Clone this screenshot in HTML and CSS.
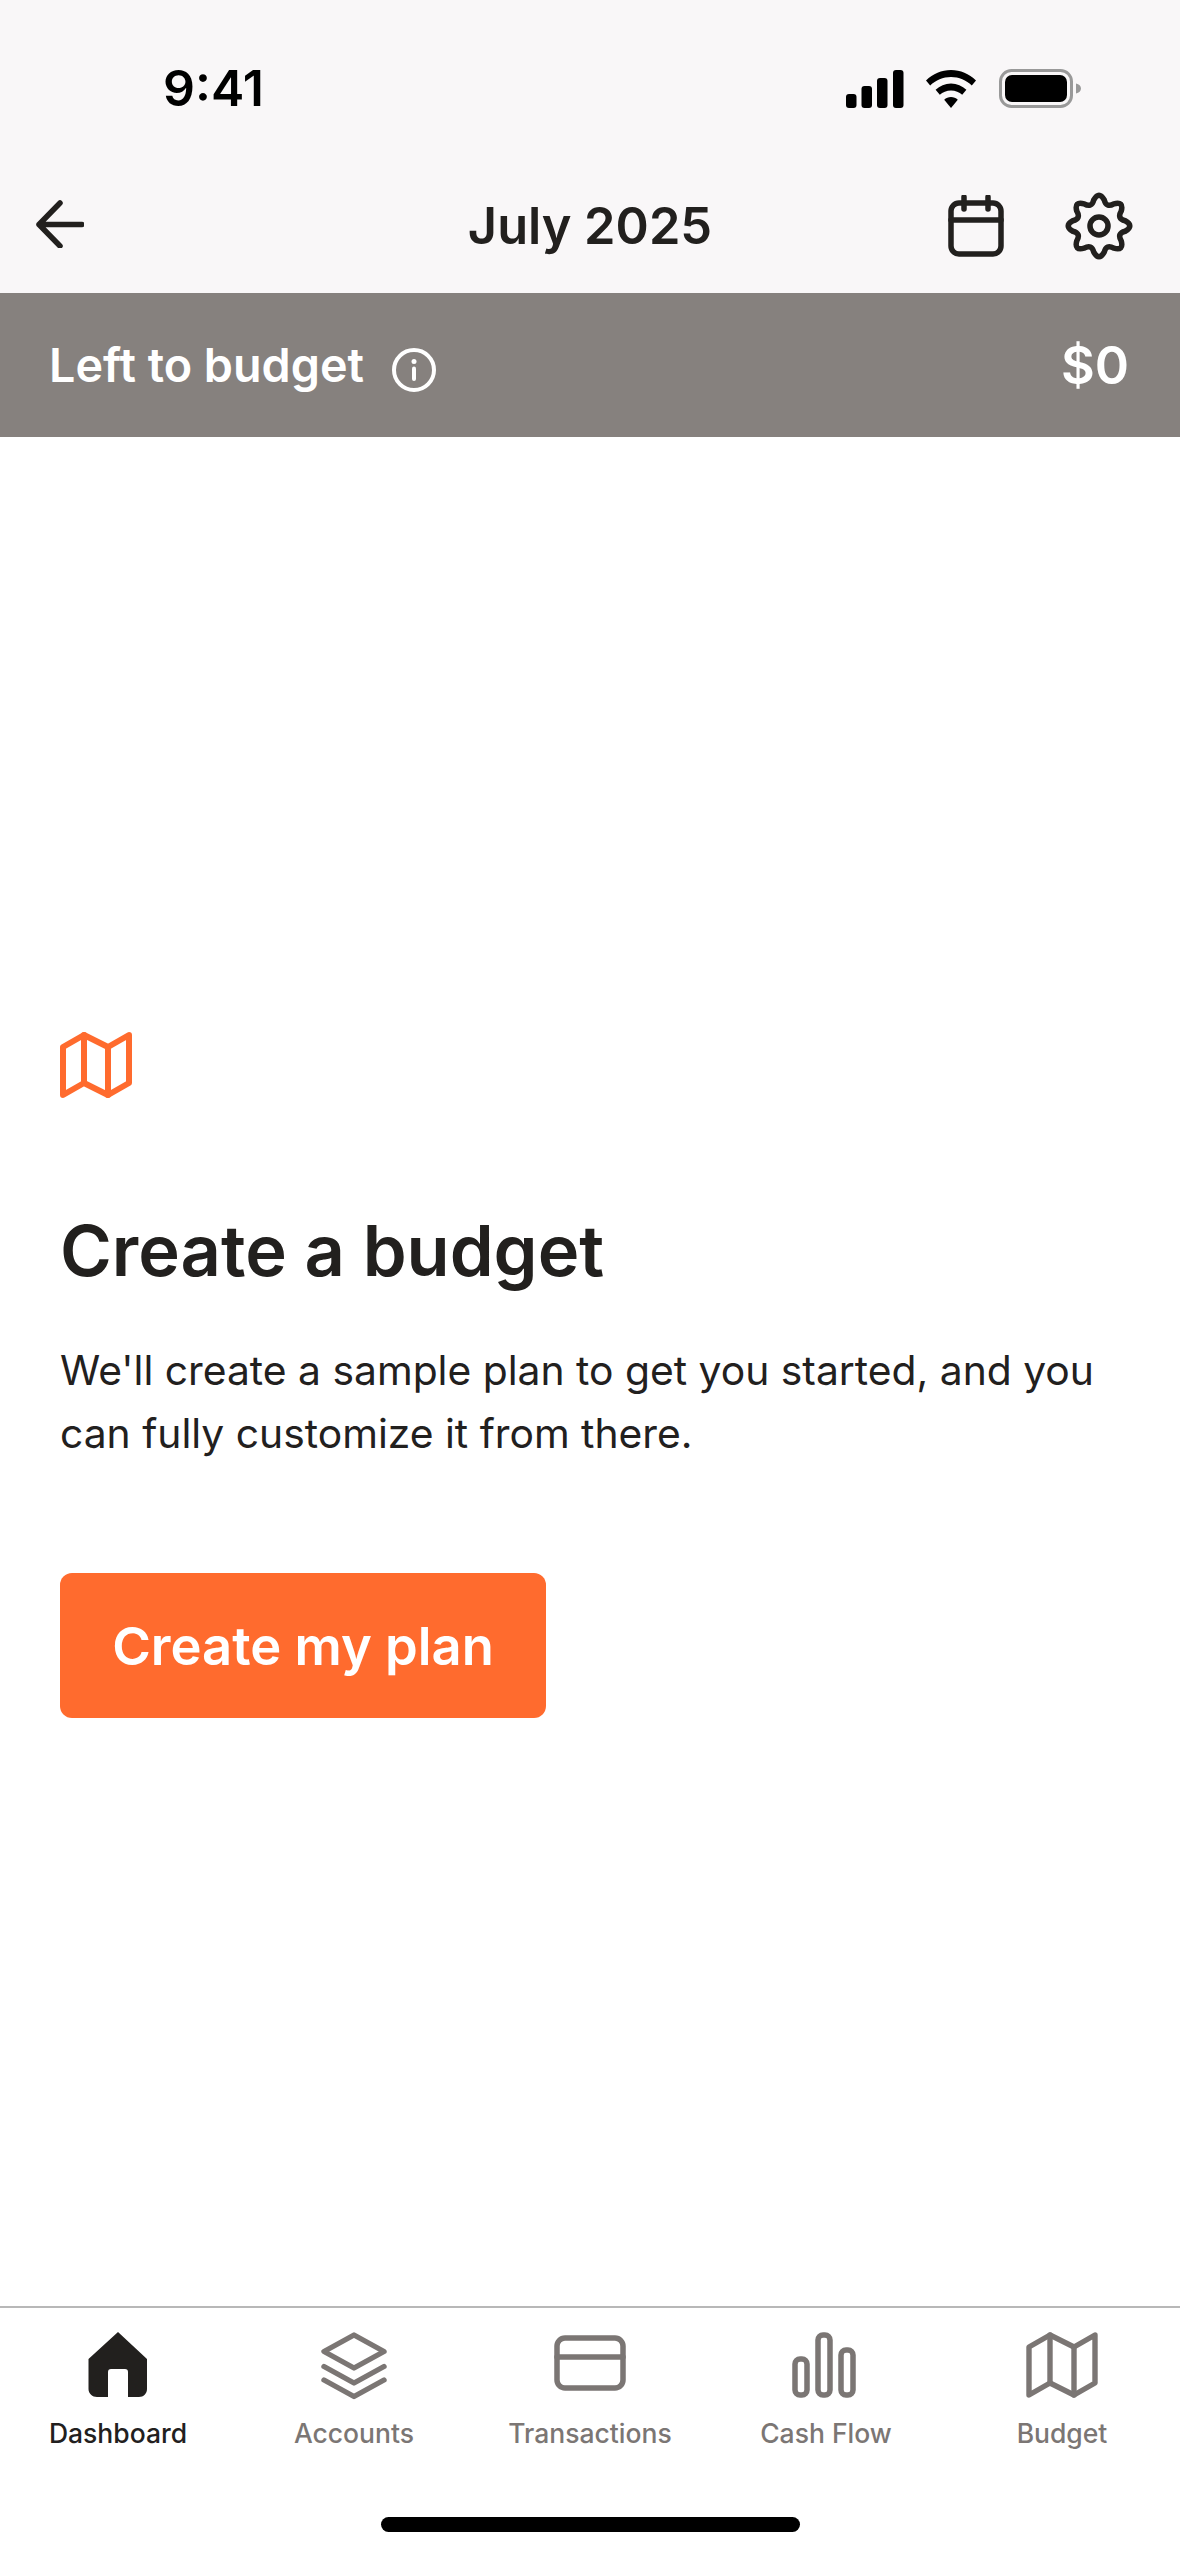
FILE: index.html
```html
<!DOCTYPE html>
<html lang="en">
<head>
<meta charset="utf-8">
<title>July 2025 budget</title>
<link rel="stylesheet" href="styles.css">
</head>
<body>
<div class="page">
  <header class="top">
    <div class="status">
      <span class="time">9:41</span>
      <div class="status-icons">
        <svg class="ic-signal" viewBox="0 0 58 38"><rect x="0" y="24" width="10.5" height="14" rx="3"/><rect x="15.5" y="16" width="10.5" height="22" rx="3"/><rect x="31" y="8" width="10.5" height="30" rx="3"/><rect x="47" y="0" width="10.5" height="38" rx="3"/></svg>
        <svg class="ic-wifi" viewBox="0 0 50 38"><path d="M25 0C34.500 0 43 3.700 50 10.500L45.800 15.500C40.300 10.200 33 7 25 7S9.700 10.200 4.200 15.500L0 10.500C7 3.700 15.500 0 25 0Z"/><path d="M25 13.500C31 13.500 36.200 15.800 40.400 19.800L36.200 24.800C33.300 22 29.400 20.400 25 20.400S16.700 22 13.800 24.800L9.600 19.800C13.800 15.800 19 13.500 25 13.500Z"/><path d="M25 27C27.600 27 30 28 31.800 29.800L25 38L18.200 29.800C20 28 22.400 27 25 27Z"/></svg>
        <svg class="ic-battery" viewBox="0 0 83 39"><rect class="batt-shell" x="1.500" y="1.500" width="71" height="36" rx="11"/><rect x="6" y="6" width="62" height="27" rx="7"/><path class="batt-cap" d="M77 14.500C80 15.300 82 17 82 19.500S80 23.700 77 24.500Z"/></svg>
      </div>
    </div>
    <div class="nav">
      <div class="nav-left">
        <svg class="ic-back" viewBox="0 0 48 48"><path d="M46 24.500H3M24 3L3 24.500L24 46"/></svg>
      </div>
      <h1 class="title">July 2025</h1>
      <div class="nav-right">
        <svg class="ic-cal" viewBox="0 0 56 62"><rect x="3" y="8" width="50" height="51" rx="8"/><path d="M3 25H53M16 2V14M40 2V14"/></svg>
        <svg class="ic-gear" viewBox="0 0 24 24"><path d="M20.730 10.260Q23.800 12 20.730 13.740Q17.910 14.450 19.400 16.940Q20.340 20.340 16.940 19.400Q14.450 17.910 13.740 20.730Q12 23.800 10.260 20.730Q9.550 17.910 7.060 19.400Q3.660 20.340 4.600 16.940Q6.090 14.450 3.270 13.740Q.2 12 3.270 10.260Q6.090 9.550 4.600 7.060Q3.660 3.660 7.060 4.600Q9.550 6.090 10.260 3.270Q12 .2 13.740 3.270Q14.450 6.090 16.940 4.600Q20.340 3.660 19.400 7.060Q17.910 9.550 20.730 10.260Z"/><circle cx="12" cy="12" r="3"/></svg>
      </div>
    </div>
  </header>

  <div class="band">
    <div class="band-label">
      <span>Left to budget</span>
      <svg class="ic-info" viewBox="0 0 44 44"><circle cx="22" cy="22" r="20"/><path class="info-stem" d="M22 20.500V31"/><circle class="info-dot" cx="22" cy="13.500" r="2.500"/></svg>
    </div>
    <span class="band-value">$0</span>
  </div>

  <main class="main">
    <svg class="ic-map-large" viewBox="0 0 24 24"><path d="M1 6V22L8 18L16 22L23 18V2L16 6L8 2Z"/><path d="M8 2V18M16 6V22"/></svg>
    <h2 class="heading">Create a budget</h2>
    <p class="copy">We'll create a sample plan to get you started, and you can fully customize it from there.</p>
    <button class="cta" type="button">Create my plan</button>
  </main>

  <nav class="tabs">
    <div class="tab tab-active">
      <svg class="tab-icon" viewBox="0 0 72 72"><path class="home" d="M36 3L65 30V60C65 64.500 61.500 68 57 68H46V43C46 41 45 40 43 40H29C27 40 26 41 26 43V68H15C10.500 68 6.500 64.500 6.500 60V30Z"/></svg>
      <span class="tab-label">Dashboard</span>
    </div>
    <div class="tab">
      <svg class="tab-icon" viewBox="0 0 24 24"><path d="M12 2L2 7.500L12 13L22 7.500Z"/><path d="M2 12.500L12 18L22 12.500M2 17L12 22.500L22 17"/></svg>
      <span class="tab-label">Accounts</span>
    </div>
    <div class="tab">
      <svg class="tab-icon" viewBox="0 0 72 72"><rect x="3" y="9" width="66" height="50" rx="8"/><path d="M3 28H69"/></svg>
      <span class="tab-label">Transactions</span>
    </div>
    <div class="tab">
      <svg class="tab-icon" viewBox="0 0 72 72"><rect x="5" y="30" width="12" height="36" rx="5"/><rect x="28" y="6" width="12" height="60" rx="5"/><rect x="51" y="21" width="12" height="45" rx="5"/></svg>
      <span class="tab-label">Cash Flow</span>
    </div>
    <div class="tab">
      <svg class="tab-icon" viewBox="0 0 24 24"><path d="M1 6V22L8 18L16 22L23 18V2L16 6L8 2Z"/><path d="M8 2V18M16 6V22"/></svg>
      <span class="tab-label">Budget</span>
    </div>
  </nav>
  <div class="home-row"><div class="home-indicator"></div></div>
</div>
</body>
</html>
```

FILE: styles.css
```css
* { box-sizing: border-box; }

html, body {
  margin: 0;
  padding: 0;
  background: #fff;
}

body {
  font-family: Inter, "Liberation Sans", sans-serif;
  color: #22201e;
}

.page {
  width: 1180px;
  height: 2556px;
  display: flex;
  flex-direction: column;
  overflow: hidden;
}

svg { display: block; }

.top { background: #f9f7f8; }

.status {
  height: 159px;
  display: flex;
  justify-content: space-between;
  align-items: flex-start;
  padding: 69px 98px 0 163px;
}

.time {
  font-size: 50px;
  line-height: 38px;
  font-weight: 600;
  color: #000;
}

.status-icons {
  display: flex;
  align-items: center;
  gap: 23px;
}

.status-icons svg { fill: #000; }
.ic-signal { width: 58px; height: 38px; margin-right: -1px; }
.ic-wifi { width: 50px; height: 38px; }
.ic-battery { width: 83px; height: 39px; }
.batt-shell { fill: none; stroke: #999; stroke-width: 3; }
.status-icons .batt-cap { fill: #999; }

.nav {
  height: 134px;
  display: grid;
  grid-template-columns: 1fr auto 1fr;
  align-items: center;
  padding: 0 36px;
}

.title {
  margin: 0;
  font-size: 50.500px;
  line-height: 60px;
  font-weight: 600;
}

.nav-right {
  display: flex;
  justify-content: flex-end;
  align-items: center;
  gap: 59px;
  padding-right: 9px;
}

.ic-back { width: 48px; height: 48px; margin-bottom: 4px; fill: none; stroke: #22201e; stroke-width: 5.500; stroke-linecap: round; stroke-linejoin: round; }
.ic-cal { width: 56px; height: 62px; fill: none; stroke: #22201e; stroke-width: 5.500; stroke-linecap: round; }
.ic-gear { width: 72px; height: 72px; fill: none; stroke: #22201e; stroke-width: 1.850; stroke-linejoin: round; }

.band {
  height: 144px;
  background: #86817e;
  color: #fff;
  display: flex;
  justify-content: space-between;
  align-items: center;
  padding: 0 51px 0 49px;
  font-weight: 600;
}

.band-label {
  display: flex;
  align-items: center;
  gap: 28px;
  font-size: 46.700px;
}

.band-value { font-size: 52px; }

.ic-info { width: 44px; height: 44px; margin-top: 10px; fill: none; stroke: #fff; stroke-width: 4; }
.info-stem { stroke-linecap: round; }
.ic-info .info-dot { fill: #fff; stroke: none; }

.main {
  flex: 1;
  padding: 592px 60px 0;
}

.ic-map-large { width: 74px; height: 72px; margin-left: -1px; fill: none; stroke: #ff6b2e; stroke-width: 2; stroke-linejoin: round; stroke-linecap: round; }

.heading {
  margin: 107px 0 0;
  font-size: 70.400px;
  line-height: 86px;
  font-weight: 600;
}

.copy {
  margin: 45px 0 0;
  font-size: 40.800px;
  line-height: 63px;
  font-weight: 400;
}

.cta {
  display: block;
  margin-top: 108px;
  width: 486px;
  height: 145px;
  border: 0;
  border-radius: 12px;
  background: #ff6b2e;
  color: #fff;
  font: 600 52.500px Inter, "Liberation Sans", sans-serif;
}

.tabs {
  height: 183px;
  border-top: 2px solid #b8b8b8;
  display: grid;
  grid-template-columns: repeat(5, 1fr);
  padding-top: 21px;
}

.tab {
  display: flex;
  flex-direction: column;
  align-items: center;
  color: #7b7674;
}

.tab-active { color: #22201e; }

.tab-icon {
  width: 72px;
  height: 72px;
  fill: none;
  stroke: #7b7674;
  stroke-width: 1.800;
  stroke-linejoin: round;
  stroke-linecap: round;
}

.tab-icon rect { stroke-width: 5.500; }
.tab-icon rect + path { stroke-width: 5.500; }

.home { fill: #22201e; stroke: none; }

.tab-label {
  margin-top: 15px;
  font-size: 26.500px;
  line-height: 34px;
  font-weight: 500;
}

.home-row {
  height: 67px;
  padding-top: 28px;
  display: flex;
  justify-content: center;
}

.home-indicator {
  width: 419px;
  height: 15px;
  border-radius: 8px;
  background: #000;
}
```
